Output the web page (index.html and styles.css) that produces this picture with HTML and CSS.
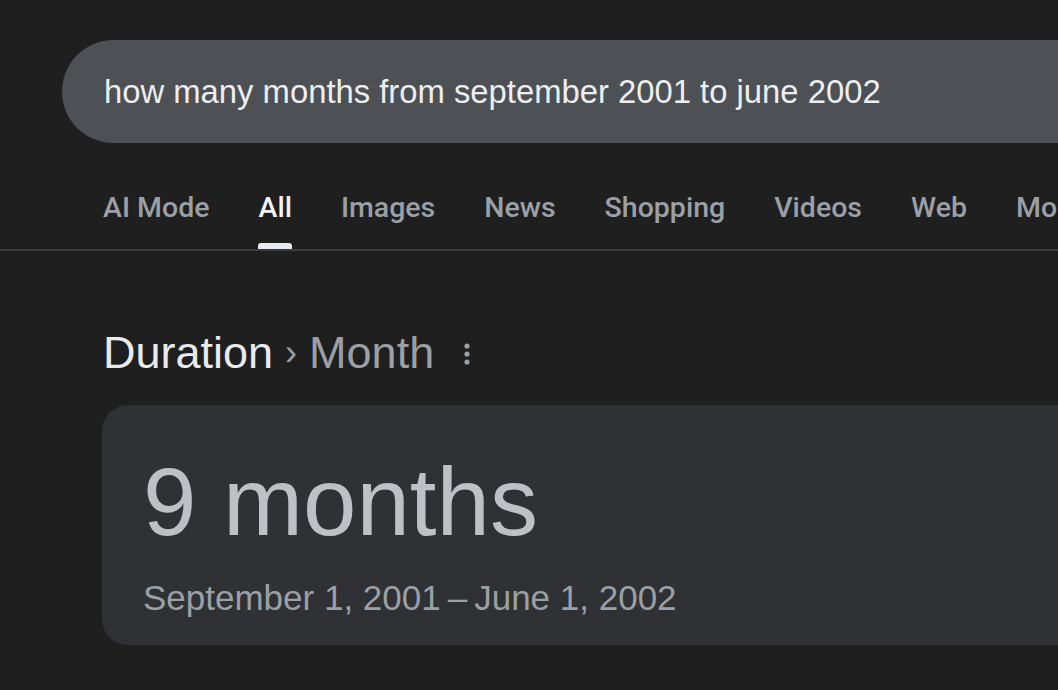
FILE: index.html
```html
<!DOCTYPE html>
<html lang="en">
<head>
<meta charset="utf-8">
<title>how many months from september 2001 to june 2002</title>
<link rel="stylesheet" href="styles.css">
</head>
<body>
<header class="top">
  <div class="search">
    <span class="query">how many months from september 2001 to june 2002</span>
  </div>
  <nav class="tabs">
    <a class="tab">AI Mode</a>
    <a class="tab active">All</a>
    <a class="tab">Images</a>
    <a class="tab">News</a>
    <a class="tab">Shopping</a>
    <a class="tab">Videos</a>
    <a class="tab">Web</a>
    <a class="tab">More</a>
  </nav>
</header>
<main class="content">
  <h2 class="crumbs">
    <span class="crumb-main">Duration</span>
    <span class="crumb-sep">›</span>
    <span class="crumb-sub">Month</span>
    <svg class="kebab" width="8" height="24" viewBox="0 0 8 24" aria-hidden="true">
      <circle cx="4" cy="4" r="2.6"/>
      <circle cx="4" cy="12" r="2.6"/>
      <circle cx="4" cy="20" r="2.6"/>
    </svg>
  </h2>
  <section class="card">
    <div class="big">9 months</div>
    <div class="range">September 1, 2001&#8201;–&#8201;June 1, 2002</div>
  </section>
</main>
</body>
</html>
```
FILE: styles.css
```css
html, body {
  margin: 0;
  padding: 0;
  background: #1f1f1f;
  overflow: hidden;
  width: 1058px;
  height: 690px;
}

body {
  font-family: "Liberation Sans", Arial, sans-serif;
  color: #e8eaed;
}

.top {
  padding-top: 40px;
}

.search {
  margin-left: 62px;
  margin-right: -300px;
  height: 103px;
  border-radius: 52px;
  background: #4d5055;
  padding-left: 42px;
  display: flex;
  align-items: center;
}

.query {
  font-size: 32.8px;
  line-height: 103px;
  color: #eceef1;
  white-space: nowrap;
}

.tabs {
  display: flex;
  gap: 49px;
  padding-left: 103px;
  margin-top: 48px;
  border-bottom: 2px solid #3a3b3d;
  white-space: nowrap;
  overflow: hidden;
}

.tab {
  display: flex;
  flex-direction: column;
  align-items: stretch;
  font-family: Roboto, "Liberation Sans", sans-serif;
  font-weight: 500;
  font-size: 28.5px;
  line-height: 33px;
  color: #9aa0a6;
  flex: none;
}

.tab::after {
  content: "";
  display: block;
  height: 6px;
  margin-top: 19px;
  border-radius: 3px 3px 0 0;
  background: transparent;
}

.tab.active {
  color: #f1f3f4;
}

.tab.active::after {
  background: #e8eaed;
}

.content {
  padding-left: 102px;
}

.crumbs {
  margin: 76px 0 0 1px;
  font-weight: 400;
  font-size: 45px;
  line-height: 52px;
  display: flex;
  align-items: center;
}

.crumb-main {
  color: #e8eaed;
}

.crumb-sep {
  color: #9aa0a6;
  font-size: 36px;
  margin: 0 12px 0 12px;
}

.crumb-sub {
  color: #9aa0a6;
}

.kebab {
  fill: #9aa0a6;
  margin-left: 29px;
  margin-top: 2px;
}

.card {
  margin-top: 26px;
  margin-right: -300px;
  background: #303134;
  border-radius: 26px;
  padding: 42px 0 27px 41px;
}

.big {
  font-size: 96px;
  line-height: 110px;
  color: #bdc1c6;
}

.range {
  margin-top: 21px;
  font-size: 35px;
  line-height: 40px;
  color: #9aa0a6;
}
```
